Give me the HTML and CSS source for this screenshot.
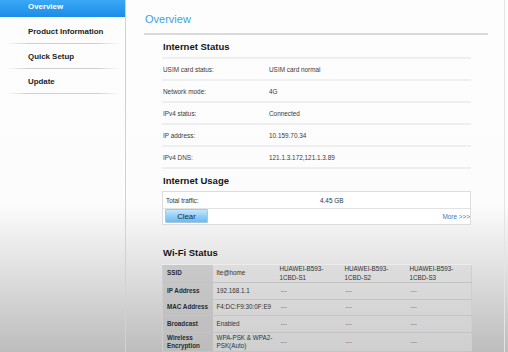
FILE: index.html
```html
<!DOCTYPE html>
<html>
<head>
<meta charset="utf-8">
<link rel="stylesheet" href="styles.css">
</head>
<body>
<div class="layout">
  <nav class="sidebar">
    <div class="nav-item active">Overview</div>
    <div class="nav-item">Product Information</div>
    <div class="nav-item">Quick Setup</div>
    <div class="nav-item">Update</div>
  </nav>
  <main class="main">
    <h1 class="page-title">Overview</h1>

    <section class="section">
      <h2 class="section-title">Internet Status</h2>
      <div class="status-list">
        <div class="status-row"><span class="label">USIM card status:</span><span class="value">USIM card normal</span></div>
        <div class="status-row"><span class="label">Network mode:</span><span class="value">4G</span></div>
        <div class="status-row"><span class="label">IPv4 status:</span><span class="value">Connected</span></div>
        <div class="status-row"><span class="label">IP address:</span><span class="value">10.159.70.34</span></div>
        <div class="status-row"><span class="label">IPv4 DNS:</span><span class="value">121.1.3.172,121.1.3.89</span></div>
      </div>
    </section>

    <section class="section">
      <h2 class="section-title">Internet Usage</h2>
      <div class="usage-box">
        <div class="usage-row"><span class="usage-label">Total traffic:</span><span class="usage-value">4.45 GB</span></div>
        <div class="usage-actions"><button class="btn-clear">Clear</button><a class="more-link">More &gt;&gt;&gt;</a></div>
      </div>
    </section>

    <section class="section wifi">
      <h2 class="section-title">Wi-Fi Status</h2>
      <table class="wifi-table">
        <colgroup><col class="c1"><col class="c2"><col class="c3"><col class="c4"><col class="c5"></colgroup>
        <tr class="r-ssid"><th>SSID</th><td>lte@home</td><td>HUAWEI-B593-<br>1CBD-S1</td><td>HUAWEI-B593-<br>1CBD-S2</td><td>HUAWEI-B593-<br>1CBD-S3</td></tr>
        <tr><th>IP Address</th><td>192.168.1.1</td><td class="dash">---</td><td class="dash">---</td><td class="dash">---</td></tr>
        <tr class="r-mac"><th>MAC Address</th><td>F4:DC:F9:30:0F:E9</td><td class="dash">---</td><td class="dash">---</td><td class="dash">---</td></tr>
        <tr><th>Broadcast</th><td>Enabled</td><td class="dash">---</td><td class="dash">---</td><td class="dash">---</td></tr>
        <tr class="r-enc"><th>Wireless<br>Encryption</th><td>WPA-PSK &amp; WPA2-<br>PSK(Auto)</td><td class="dash">---</td><td class="dash">---</td><td class="dash">---</td></tr>
      </table>
    </section>
  </main>
</div>
</body>
</html>
```

FILE: styles.css
```css
html, body {
  margin: 0;
  padding: 0;
}
body {
  width: 508px;
  height: 352px;
  overflow: hidden;
  font-family: "Liberation Sans", Arial, sans-serif;
  color: #333;
  background: linear-gradient(to bottom, #fdfdfd 0, #fcfcfc 205px, #bdbdbd 352px);
}
.layout {
  display: flex;
  width: 505px;
  height: 352px;
}
.sidebar {
  width: 125px;
  flex: none;
  border-right: 1px solid #d2d2d2;
}
.nav-item {
  height: 22px;
  line-height: 22px;
  padding: 2px 0 1px 28px;
  font-size: 7.9px;
  font-weight: bold;
  color: #1e1e1e;
  background-image: linear-gradient(to right, rgba(200,200,200,0), #cfcfcf 20%, #cfcfcf 80%, rgba(200,200,200,0));
  background-repeat: no-repeat;
  background-size: 114px 1px;
  background-position: 6px 100%;
}
.nav-item.active {
  height: 17px;
  line-height: 14px;
  padding: 0 0 0 28px;
  margin-bottom: 2px;
  color: #fff;
  background: linear-gradient(to bottom, #3aa8f6, #1b8de8);
}
.main {
  flex: 1;
  border-right: 1px solid #e4e4e4;
}
.page-title {
  margin: 0 16px 0 18px;
  padding: 13px 0 7px 1px;
  line-height: 13px;
  font-size: 11px;
  font-weight: normal;
  color: #3ea2e2;
  border-bottom: 2px solid #dadada;
}
.section {
  margin-left: 36px;
  width: 309px;
}
.section-title {
  margin: 0;
  padding: 6px 0 4px 1px;
  line-height: 12px;
  font-size: 9.5px;
  font-weight: bold;
  color: #151515;
}
.status-list {
  border-bottom: 2px solid #efefef;
}
.status-row {
  display: flex;
  height: 20px;
  align-items: center;
  border-top: 2px solid #efefef;
  font-size: 6.4px;
  color: #3a3a3a;
}
.status-row .label {
  width: 106px;
  padding-left: 1px;
}
.usage-box {
  border: 1px solid #dcdcdc;
  background: #fff;
}
.usage-row {
  display: flex;
  height: 16px;
  align-items: center;
  border-bottom: 1px solid #e2e2e2;
  font-size: 6.4px;
  color: #333;
}
.usage-label {
  width: 154px;
  padding-left: 3px;
}
.usage-actions {
  display: flex;
  height: 15px;
  align-items: flex-start;
  justify-content: space-between;
  padding-left: 2px;
}
.btn-clear {
  width: 43px;
  height: 14px;
  margin: 0;
  padding: 0;
  font-family: "Liberation Sans", Arial, sans-serif;
  font-size: 7.8px;
  color: #1c2a36;
  border: 1px solid #a9c6dc;
  border-radius: 1px;
  background: linear-gradient(to bottom, #c6e7fc, #8fcdf5 55%, #6cbcf0);
}
.more-link {
  font-size: 6.4px;
  color: #2f7cc6;
  line-height: 15px;
}
.wifi .section-title {
  padding-top: 22px;
  padding-bottom: 5px;
}
.wifi-table {
  width: 309px;
  table-layout: fixed;
  border-collapse: collapse;
  background: linear-gradient(to bottom, #dddddd, #cfcfcf);
  border: 1px solid #cfcfcf;
  font-size: 6.3px;
  color: #333;
}
.wifi-table col.c1 { width: 50px; }
.wifi-table col.c2 { width: 63px; }
.wifi-table col.c3 { width: 65px; }
.wifi-table col.c4 { width: 65px; }
.wifi-table col.c5 { width: 66px; }
.wifi-table th,
.wifi-table td {
  height: 16px;
  padding: 0 0 0 4px;
  line-height: 8.5px;
  text-align: left;
  vertical-align: middle;
  border-top: 1px solid #ececec;
  border-bottom: 1px solid #c4c4c4;
}
.wifi-table th {
  font-weight: bold;
  color: #2a2a2a;
  background: rgba(0, 0, 0, 0.09);
}
.wifi-table td.dash {
  color: #777;
  padding-left: 5px;
}
.wifi-table .r-mac th,
.wifi-table .r-mac td {
  height: 15px;
}
.wifi-table .r-enc th,
.wifi-table .r-enc td {
  height: 18px;
}
```
